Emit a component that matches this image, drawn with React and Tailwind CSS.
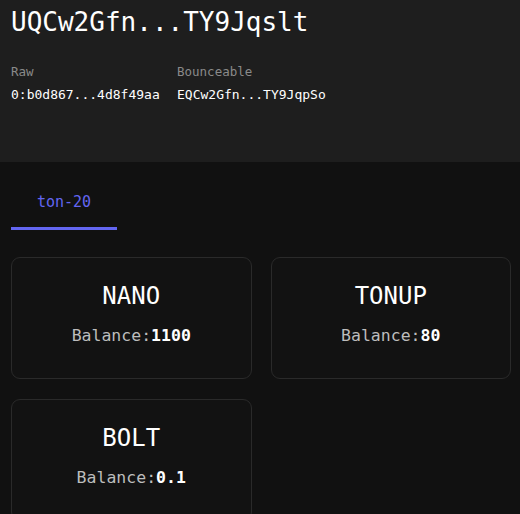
import React from "react";

const mono = { fontFamily: '"DejaVu Sans Mono", "Liberation Mono", monospace' };

const tokens = [
  { name: "NANO", balance: "1100" },
  { name: "TONUP", balance: "80" },
  { name: "BOLT", balance: "0.1" },
];

function TokenCard({ name, balance }) {
  return (
    <div className="h-[122px] rounded-[9px] border border-[#2a2a2a] bg-[#121212] flex flex-col items-center pt-[24px] gap-[16px]">
      <div className="text-[24px] leading-[28px] text-white">{name}</div>
      <div className="text-[16.5px] leading-[20px]">
        <span className="text-[#bdbdbd]">Balance:</span>
        <span className="text-white font-bold">{balance}</span>
      </div>
    </div>
  );
}

export default function App() {
  return (
    <div className="min-h-[514px] w-[520px] bg-[#111111] overflow-hidden" style={mono}>
      {/* address header */}
      <div className="h-[162px] bg-[#1e1e1e] px-[11px] pt-[6px]">
        <div className="text-[26px] leading-[32px] text-white">UQCw2Gfn...TY9Jqslt</div>
        <div className="mt-[26px] flex gap-[18px]">
          <div className="w-[148px]">
            <div className="text-[12.5px] leading-[16px] text-[#8a8a8a]">Raw</div>
            <div className="mt-[7px] text-[13px] leading-[16px] text-white">0:b0d867...4d8f49aa</div>
          </div>
          <div>
            <div className="text-[12.5px] leading-[16px] text-[#8a8a8a]">Bounceable</div>
            <div className="mt-[7px] text-[13px] leading-[16px] text-white">EQCw2Gfn...TY9JqpSo</div>
          </div>
        </div>
      </div>

      {/* tabs */}
      <div className="px-[11px] pt-[28px]">
        <div className="w-[106px] border-b-[3px] border-[#6366f1] pb-[13px] text-center">
          <span className="text-[15px] leading-[20px] text-[#6366f1]">ton-20</span>
        </div>
      </div>

      {/* token grid */}
      <div className="mt-[27px] pl-[11px] pr-[9px] grid grid-cols-2 gap-x-[19px] gap-y-[20px]">
        {tokens.map((t) => (
          <TokenCard key={t.name} {...t} />
        ))}
      </div>
    </div>
  );
}
